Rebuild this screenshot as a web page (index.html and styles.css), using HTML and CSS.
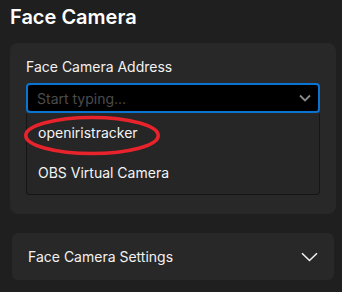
FILE: index.html
```html
<!DOCTYPE html>
<html lang="en">
<head>
  <meta charset="UTF-8" />
  <title>Face Camera</title>
  <link rel="stylesheet" href="styles.css">
</head>
<body>
  <h1>Face Camera</h1>

  <div class="card">
    <label class="field-label">Face Camera Address</label>
    <div class="combo">
      <input type="text" placeholder="Start typing..." />
      <svg class="combo-arrow" width="12" height="8" viewBox="0 0 12 8"><path d="M1 1.5 L6 6.5 L11 1.5" fill="none" stroke="#8a8a8a" stroke-width="1.8"/></svg>
    </div>
    <ul class="options">
      <li>openiristracker</li>
      <li>OBS Virtual Camera</li>
    </ul>
    <svg class="mark" width="138" height="41" viewBox="0 0 138 41"><ellipse cx="69" cy="20.5" rx="66.2" ry="18" fill="none" stroke="#e8232b" stroke-width="3.6"/></svg>
  </div>

  <div class="card collapsed">
    <span>Face Camera Settings</span>
    <svg width="17" height="10" viewBox="0 0 17 10"><path d="M1 1.2 L8.5 8.5 L16 1.2" fill="none" stroke="#f0f0f0" stroke-width="1.6"/></svg>
  </div>
</body>
</html>
```

FILE: styles.css
```css
body {
  margin: 0;
  padding: 5px 6px 0 10px;
  font-family: 'Inter', 'Noto Sans', sans-serif;
  background: #1f1f1f;
  color: #f2f2f2;
}

h1 {
  margin: 0;
  font-size: 20px;
  line-height: 24px;
  font-weight: 600;
  color: #ffffff;
}

.card {
  position: relative;
  margin-top: 14px;
  background: #282828;
  border-radius: 8px;
  padding: 14px 16px 19px;
}

.field-label {
  display: block;
  font-size: 14px;
  line-height: 20px;
  margin-bottom: 6px;
}

.combo {
  position: relative;
}

.combo input {
  display: block;
  box-sizing: border-box;
  width: 100%;
  height: 30px;
  padding: 0 30px 0 9px;
  background: #000;
  border: 2px solid #0a74d2;
  border-radius: 4px;
  color: #eee;
  font-family: inherit;
  font-size: 14px;
  outline: none;
}

.combo input::placeholder {
  color: #4c4c4c;
}

.combo-arrow {
  position: absolute;
  right: 9px;
  top: 11px;
}

.options {
  list-style: none;
  margin: 1px 0 0;
  padding: 0;
  background: #262626;
  border: 1px solid #151515;
  border-top: none;
  border-radius: 0 0 4px 4px;
}

.options li {
  height: 40px;
  line-height: 38px;
  padding: 0 11px;
  font-size: 14px;
  color: #f4f4f4;
}

.mark {
  position: absolute;
  left: 13px;
  top: 72px;
}

.collapsed {
  margin: 19px 2px 0 2px;
  height: 47px;
  padding: 0 16px;
  border-radius: 6px;
  display: flex;
  align-items: center;
  justify-content: space-between;
  font-size: 14px;
}
```
